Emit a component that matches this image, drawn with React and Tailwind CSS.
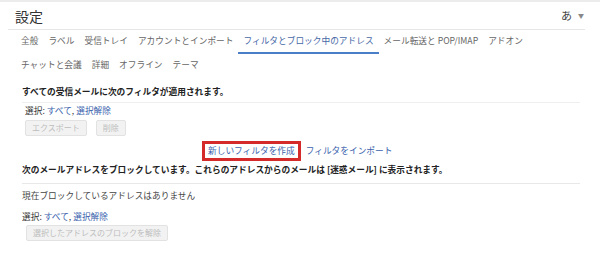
import React from 'react';

const tabsRow1 = [
  { label: '全般' },
  { label: 'ラベル' },
  { label: '受信トレイ' },
  { label: 'アカウントとインポート' },
  { label: 'フィルタとブロック中のアドレス', active: true },
  { label: 'メール転送と POP/IMAP' },
  { label: 'アドオン' },
];

const tabsRow2 = ['チャットと会議', '詳細', 'オフライン', 'テーマ'];

const Tab = ({ label, active }) => (
  <div
    className={`h-[24px] px-[5px] flex items-center whitespace-nowrap border-b-2 ${
      active ? 'border-[#4a7fc8] text-[#4668a6]' : 'border-transparent text-[#666]'
    }`}
  >
    {label}
  </div>
);

const SelectRow = ({ className = '' }) => (
  <div className={`h-[12px] leading-[12px] text-[#333] ${className}`}>
    選択: <span className="text-[#3a5fad]">すべて</span>,{' '}
    <span className="text-[#3a5fad]">選択解除</span>
  </div>
);

const GreyButton = ({ children }) => (
  <div className="h-[16px] px-[6px] flex items-center bg-[#f2f2f2] border border-[#e2e2e2] rounded-[2px] text-[8px] text-[#bdbdbd] whitespace-nowrap">
    {children}
  </div>
);

export default function App() {
  return (
    <div
      className="w-[600px] h-[263px] bg-white overflow-hidden text-[8.7px] border-t-2 border-[#ececec]"
      style={{ fontFamily: '"Noto Sans CJK JP", "Noto Sans", sans-serif' }}
    >
      {/* header */}
      <div className="h-[28px] ml-[8px] mr-[15px] flex items-center justify-between border-b border-[#e6e6e6]">
        <div className="pl-[7px] text-[14px] text-[#333] leading-none">設定</div>
        <div className="flex items-center gap-[6px] pr-[1px] text-[#444]">
          <span className="text-[11px] leading-none">あ</span>
          <span className="text-[6px] text-[#888]">▼</span>
        </div>
      </div>

      {/* tabs */}
      <div className="pl-[16px]">
        <div className="flex">
          {tabsRow1.map((t) => (
            <Tab key={t.label} label={t.label} active={t.active} />
          ))}
        </div>
        <div className="flex">
          {tabsRow2.map((t) => (
            <Tab key={t} label={t} />
          ))}
        </div>
      </div>

      {/* content */}
      <div className="pl-[22px] pr-[20px] text-[#222]">
        <div className="mt-[8px] pb-[4px] border-b border-[#efefef]">
          <div className="h-[12px] leading-[12px] font-bold">すべての受信メールに次のフィルタが適用されます。</div>
        </div>
        <SelectRow className="mt-[2px] pl-[3px]" />
        <div className="mt-[3px] pl-[3px] flex gap-[9px]">
          <GreyButton>エクスポート</GreyButton>
          <GreyButton>削除</GreyButton>
        </div>

        <div className="mt-[5px] pl-[180px] flex items-center gap-[5px]">
          <div className="h-[20px] px-[3px] flex items-center border-[3px] border-[#d42a2a] text-[#3a5fad] whitespace-nowrap">
            新しいフィルタを作成
          </div>
          <div className="text-[#3a5fad] whitespace-nowrap">フィルタをインポート</div>
        </div>

        <div className="mt-[3px] pb-[7px] border-b border-[#e8e8e8]">
          <div className="h-[12px] leading-[12px] font-bold whitespace-nowrap">
            次のメールアドレスをブロックしています。これらのアドレスからのメールは [迷惑メール] に表示されます。
          </div>
        </div>
        <div className="mt-[6px] h-[12px] leading-[12px] text-[#444]">現在ブロックしているアドレスはありません</div>
        <SelectRow className="mt-[9px]" />
        <div className="mt-[2px] pl-[4px] flex">
          <GreyButton>選択したアドレスのブロックを解除</GreyButton>
        </div>
      </div>
    </div>
  );
}
